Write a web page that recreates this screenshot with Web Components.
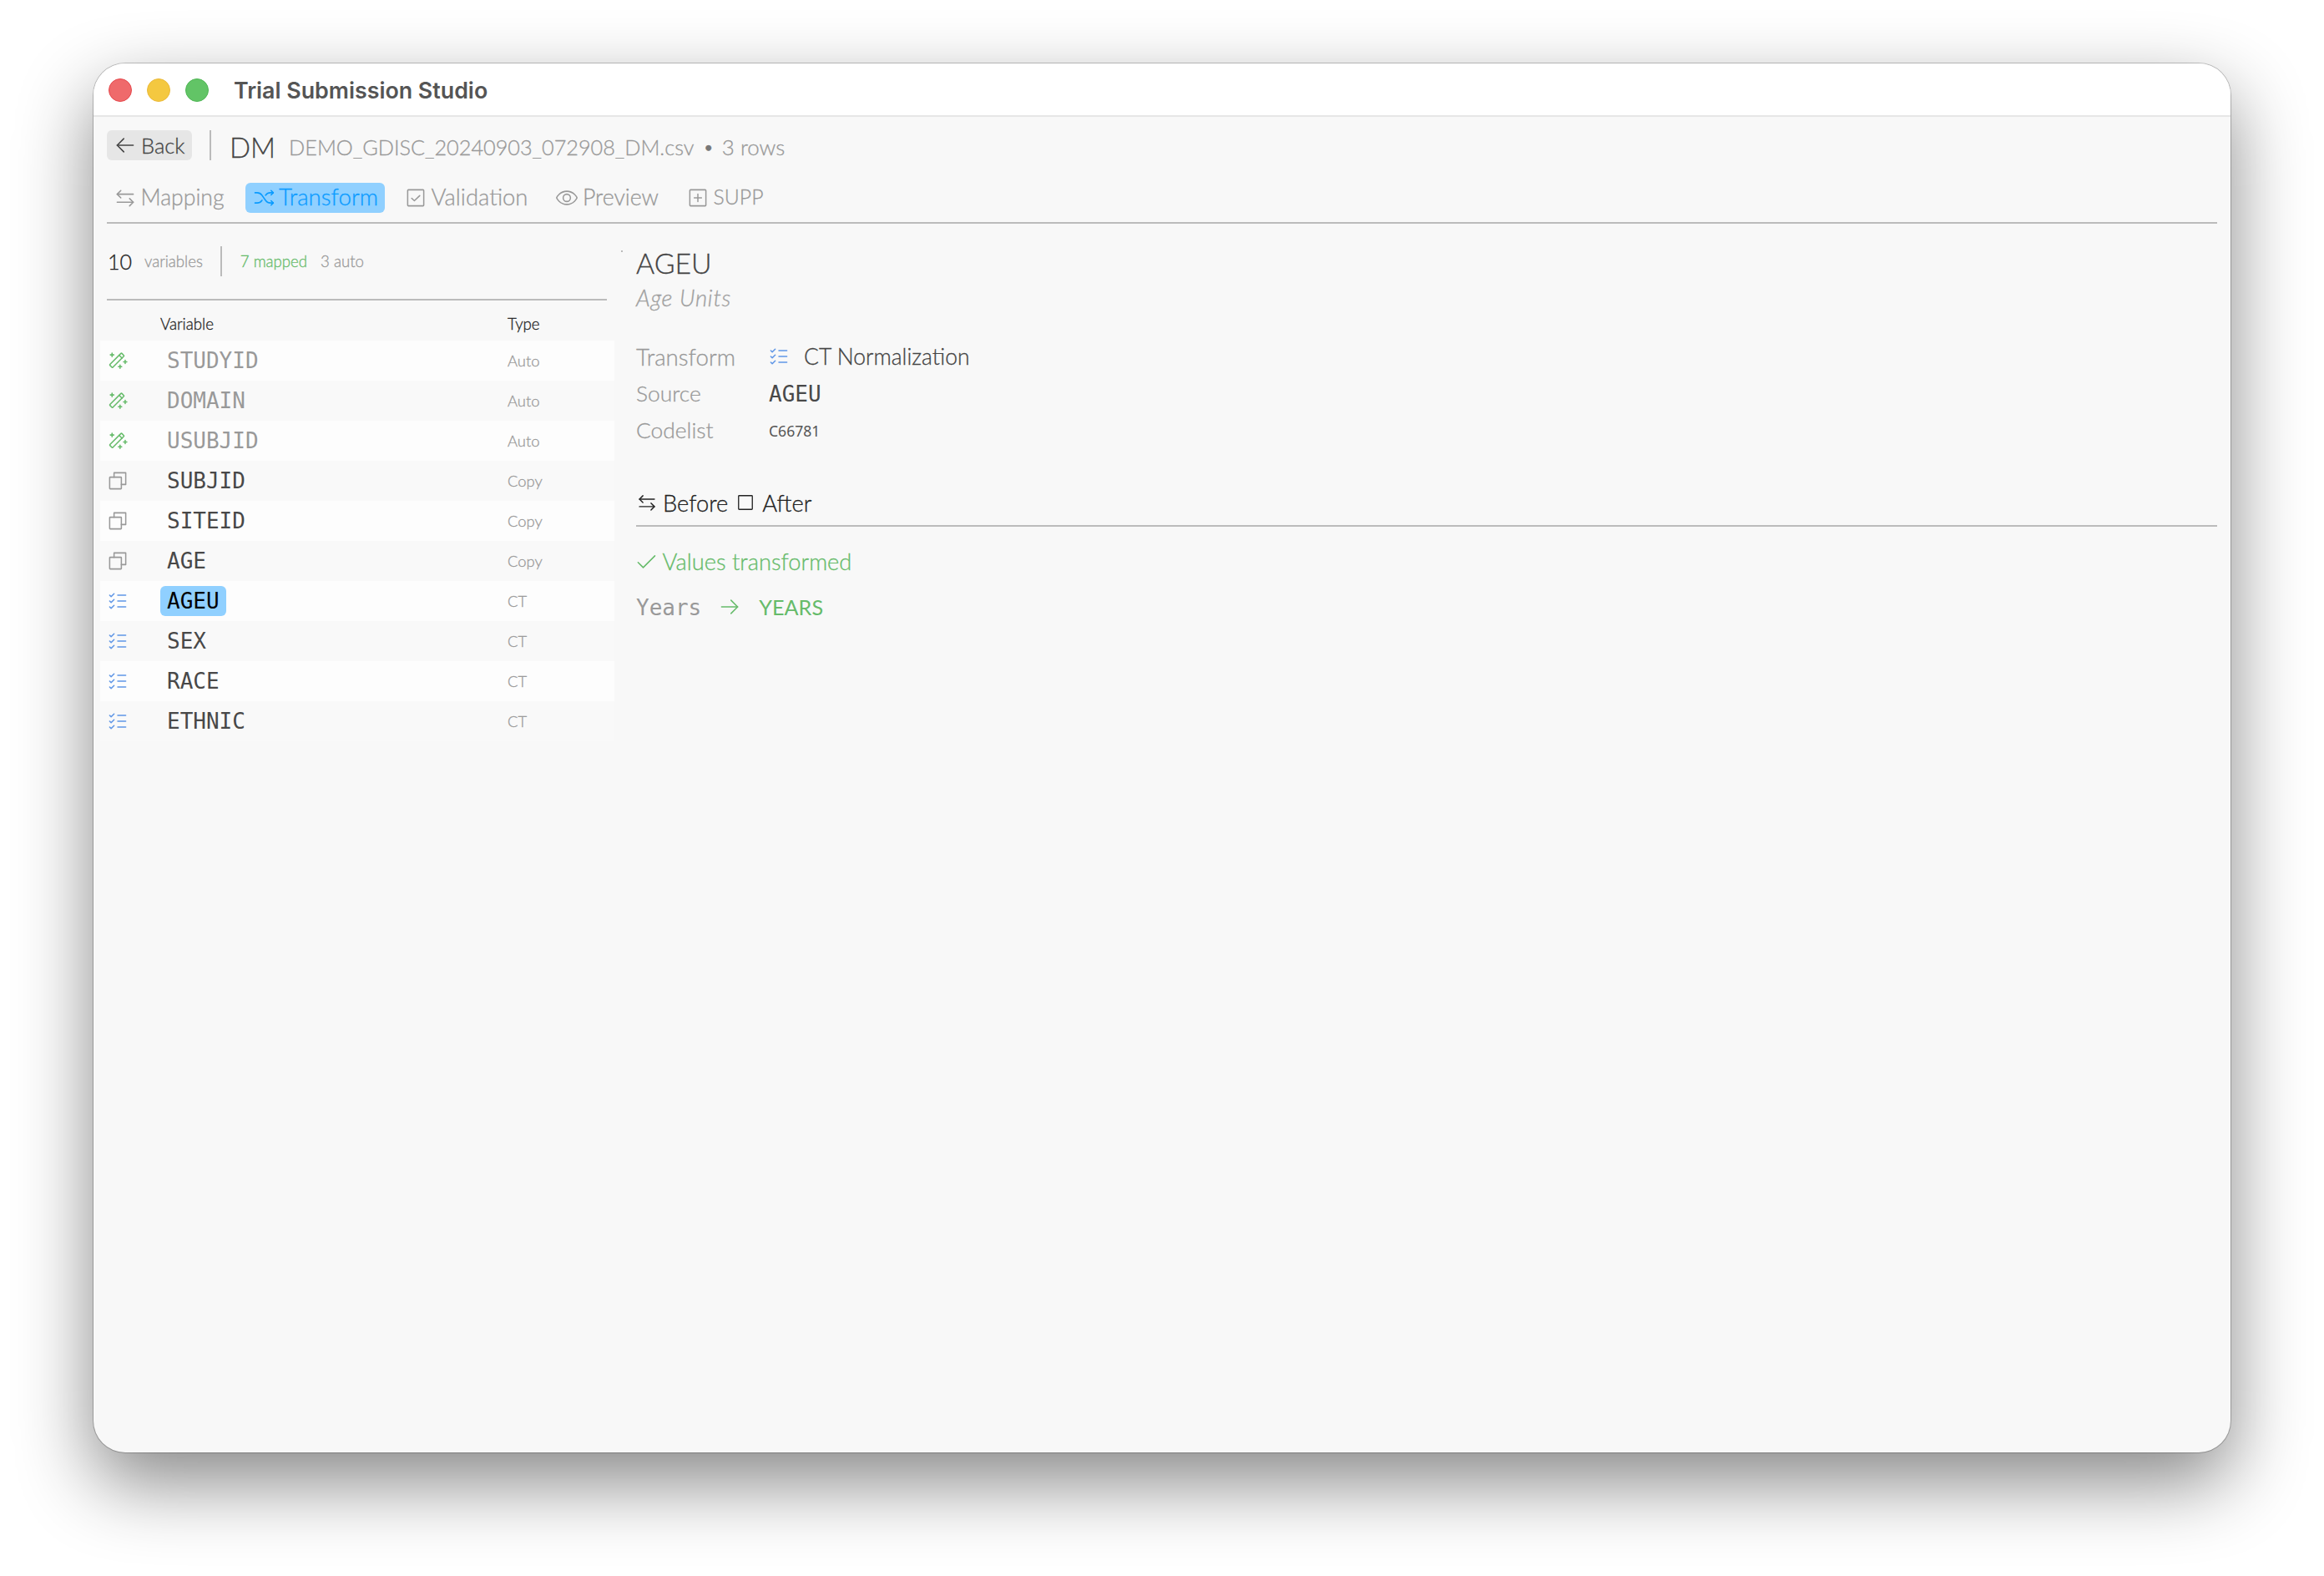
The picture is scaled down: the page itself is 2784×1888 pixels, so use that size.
<!doctype html>
<html><head><meta charset="utf-8"><title>Trial Submission Studio</title>
<style>html,body{margin:0;background:#fff}</style></head>
<body>
<app-window>
  <title-bar slot="title">Trial Submission Studio</title-bar>
  <top-bar></top-bar>
  <tab-bar></tab-bar>
  <div class="x" style="display:grid;grid-template-columns:616px 1fr;column-gap:26px;margin-left:-8px">
    <var-panel></var-panel>
    <detail-panel></detail-panel>
  </div>
</app-window>
<script>
const P={
 back:'<line x1="216" y1="128" x2="40" y2="128"/><polyline points="112,56 40,128 112,200"/>',
 swap:'<line x1="40" y1="88" x2="216" y2="88"/><polyline points="80,48 40,88 80,128"/><line x1="40" y1="176" x2="216" y2="176"/><polyline points="176,136 216,176 176,216"/>',
 shuffle:'<path d="M32,72H55.06a64,64,0,0,1,52.08,26.8l41.72,58.4A64,64,0,0,0,200.94,184H232"/><polyline points="208,48 232,72 208,96"/><polyline points="208,160 232,184 208,208"/><path d="M147,100.18l1.84-2.58A64,64,0,0,1,200.94,72H232"/><path d="M32,184H55.06a64,64,0,0,0,52.08-26.8l1.84-2.58"/>',
 checksq:'<rect x="40" y="40" width="176" height="176" rx="8"/><polyline points="172,104 113.3,160 84,132"/>',
 eye:'<path d="M128,56C48,56,16,128,16,128s32,72,112,72,112-72,112-72S208,56,128,56Z"/><circle cx="128" cy="128" r="40"/>',
 plussq:'<rect x="40" y="40" width="176" height="176" rx="8"/><line x1="88" y1="128" x2="168" y2="128"/><line x1="128" y1="88" x2="128" y2="168"/>',
 wand:'<rect x="27" y="103" width="184" height="44" rx="7" transform="rotate(-45 119 125)"/><line x1="143" y1="69" x2="175" y2="101"/><path d="M66,46V84M47,65H85M154,176V212M136,194H172M210,124V160M192,142H228"/>',
 copy:'<polyline points="168,168 216,168 216,40 88,40 88,88"/><rect x="40" y="88" width="128" height="128" rx="6"/>',
 list:'<line x1="128" y1="128" x2="216" y2="128"/><line x1="128" y1="64" x2="216" y2="64"/><line x1="128" y1="192" x2="216" y2="192"/><polyline points="40,64 56,80 88,48"/><polyline points="40,128 56,144 88,112"/><polyline points="40,192 56,208 88,176"/>',
 check:'<polyline points="40,144 96,200 224,72"/>',
 right:'<line x1="40" y1="128" x2="216" y2="128"/><polyline points="144,56 216,128 144,200"/>',
 square:'<rect x="40" y="40" width="176" height="176" rx="8"/>'
};
function def(name,css,html){
 customElements.define(name,class extends HTMLElement{
  connectedCallback(){
   if(this.shadowRoot)return;
   const r=this.attachShadow({mode:'open'});
   r.innerHTML='<style>'+css+'</style>'+(typeof html==='function'?html(this):html);
  }
 });
}
const UI='Lato,"Liberation Sans",sans-serif', MONO='"DejaVu Sans Mono",monospace';
def('x-icon',':host{display:inline-flex;flex:none;width:var(--s,28px);height:var(--s,28px)}svg{width:100%;height:100%;fill:none;stroke:currentColor;stroke-linecap:round;stroke-linejoin:round}',
 h=>`<svg viewBox="0 0 256 256" stroke-width="${h.getAttribute('w')||14}">${P[h.getAttribute('name')]}</svg>`);
def('app-window',`:host{display:block;width:2560px;height:1664px;margin:76px 112px 148px;box-sizing:border-box;background:#f8f8f8;border-radius:38px;box-shadow:0 0 0 1px rgba(0,0,0,.22),0 36px 90px rgba(0,0,0,.47);overflow:hidden;-webkit-text-stroke:.3px}
 .content{padding:16px 16px 0}`,'<slot name="title"></slot><div class="content"><slot></slot></div>');
def('title-bar',`:host{display:flex;align-items:center;box-sizing:border-box;height:64px;background:#fff;border-bottom:2px solid #e6e6e6;padding:2px 0 0 18px;font:600 26.8px Inter,sans-serif;color:#555;-webkit-text-stroke:0}
 i{width:26px;height:26px;border-radius:50%;margin-right:18px;border:1px solid}
 .r{background:#ef6a6b;border-color:#e5484d}.y{background:#f4c840;border-color:#eab93a}.g{background:#62c466;border-color:#4fb655}
 span{margin-left:12px}`,'<i class="r"></i><i class="y"></i><i class="g"></i><span><slot></slot></span>');
def('top-bar',`:host{display:flex;align-items:center;height:36px;font:300 25.9px ${UI};color:#999}
 .back{display:flex;align-items:center;gap:5px;height:36px;padding:0 8px;background:#e6e6e6;border-radius:6px;color:#444;font-size:25.5px;box-sizing:border-box;width:102px}
 .sep{width:2px;height:36px;background:#bbb;margin:0 22px 0 21px}
 .dm{font-size:33px;color:#444;margin-right:16px;position:relative;top:2px;line-height:36px}
 .f{font-size:25.25px;position:relative;top:2px}
 .dot{margin:0 11px 0 12px;position:relative;top:2px;font-size:18px;font-weight:400;color:#777}.rows{position:relative;top:2px}`,
 `<div class="back"><x-icon name="back"></x-icon><span>Back</span></div><div class="sep"></div><span class="dm">DM</span><span class="f">DEMO_GDISC_20240903_072908_DM.csv</span><span class="dot">•</span><span class="rows">3 rows</span>`);
def('tab-item',`:host{display:flex;align-items:center;gap:4.5px;height:36px;padding:0 8px;border-radius:6px;color:#999;font:300 var(--fs,27px) ${UI}}
 span{position:relative;top:-1.5px}
 :host([active]){background:#90d0ff;color:#0a9bff}`,
 h=>`<x-icon name="${h.getAttribute('icon')}"></x-icon><span><slot></slot></span>`);
def('tab-bar',`:host{display:flex;gap:17px;margin-top:27px;padding-bottom:11px;border-bottom:2px solid #bbb}`,
 `<tab-item icon="swap" style="--fs:26.6px">Mapping</tab-item><tab-item icon="shuffle" active style="--fs:27.7px">Transform</tab-item><tab-item icon="checksq" style="--fs:27.4px;margin-left:-2px">Validation</tab-item><tab-item icon="eye" style="--fs:26.7px">Preview</tab-item><tab-item icon="plussq" style="--fs:24.8px">SUPP</tab-item>`);
def('var-row',`:host{display:grid;grid-template-columns:72px 416px 1fr;align-items:center;height:48px;background:#f9f9f9}
 :host([alt]){background:#fdfdfd}
 x-icon{margin-left:7px;color:var(--ic)}
 .n{justify-self:start;height:36px;padding:0 8px;border-radius:6px;font:26px/36px ${MONO};color:#484848;-webkit-text-stroke:0}
 :host([dim]) .n{color:#999}
 :host([sel]) .n{background:#90d0ff;color:#000}
 .t{font:300 18.4px ${UI};color:#999}`,
 h=>`<x-icon name="${h.getAttribute('icon')}" style="--ic:${h.getAttribute('ic')}"></x-icon><span class="n">${h.getAttribute('n')}</span><span class="t">${h.getAttribute('t')}</span>`);
def('var-panel',`:host{display:block}
 .s{display:flex;align-items:center;height:36px;margin:27px 0 0 8px;font:300 18.6px ${UI};color:#999;width:608px}
 .c{font-size:25px;color:#222;margin:0 16px 0 1px;width:28px}
 .sp{width:2px;height:36px;background:#bbb;margin:0 22px 0 21px}
 .m{color:#66bb6a;margin-right:16px}
 hr{height:2px;border:0;background:#bbb;margin:27px 0 0 8px;width:599px}
 .h{display:grid;grid-template-columns:72px 416px 1fr;align-items:center;box-sizing:border-box;height:48px;padding-top:8px;font:300 18.7px ${UI};color:#222}
 .h span:first-child{grid-column:2}`,
 ()=>{
  const G='#66bb6a',K='#999',B='#5f96e6';
  const rows=[['STUDYID','Auto','wand',G,1],['DOMAIN','Auto','wand',G,1],['USUBJID','Auto','wand',G,1],['SUBJID','Copy','copy',K],['SITEID','Copy','copy',K],['AGE','Copy','copy',K],['AGEU','CT','list',B,0,1],['SEX','CT','list',B],['RACE','CT','list',B],['ETHNIC','CT','list',B]];
  return `<div class="s"><span class="c">10</span><span>variables</span><span class="sp"></span><span class="m">7 mapped</span><span>3 auto</span></div><hr><div class="h"><span>Variable</span><span>Type</span></div>`+
  rows.map((r,i)=>`<var-row n="${r[0]}" t="${r[1]}" icon="${r[2]}" ic="${r[3]}" ${i%2==0?'alt':''} ${r[4]?'dim':''} ${r[5]?'sel':''}></var-row>`).join('');
 });
def('detail-panel',`:host{display:block;position:relative;font:300 26.4px ${UI};color:#999}
 .dot{position:absolute;left:-18px;top:32px;width:2px;height:2px;background:#bbb}
 h1{margin:25px 0 0;font:300 33.8px/44px ${UI};color:#444}
 .sub{margin-top:4px;font:italic 300 27.5px/32px ${UI};color:#a0a0a0;letter-spacing:.75px}
 dl{display:grid;grid-template-columns:159px 1fr;grid-auto-rows:44px;align-items:center;margin:32px 0 0}
 dt,dd{margin:0}
 dd{display:flex;align-items:center;color:#444}
 dd x-icon{color:#5f96e6;margin:0 16px 0 -2px}
 .tr{font-size:27.7px}
 .mono{font:26px ${MONO};color:#484848;-webkit-text-stroke:0;position:relative;top:1px}
 .cl{font:400 17.6px "Noto Sans",sans-serif;color:#555;-webkit-text-stroke:0;position:relative;top:1px}
 .tabs{display:flex;align-items:center;height:36px;margin-top:47px;padding-bottom:9px;border-bottom:2px solid #bbb;color:#222;font-size:27.3px}
 .ok{display:flex;align-items:center;height:36px;margin-top:23px;color:#66bb6a;font-size:27.3px}
 .vals{display:flex;align-items:center;height:36px;margin-top:19px;color:#66bb6a}
 .o{font:26px ${MONO};color:#999;-webkit-text-stroke:0;position:relative;top:1px}
 .nw{font:400 25.2px ${UI};-webkit-text-stroke:0}`,
 `<span class="dot"></span><h1>AGEU</h1><div class="sub">Age Units</div>
 <dl><dt class="tr">Transform</dt><dd><x-icon name="list"></x-icon><span style="font-size:26.5px">CT Normalization</span></dd><dt>Source</dt><dd class="mono">AGEU</dd><dt>Codelist</dt><dd class="cl">C66781</dd></dl>
 <div class="tabs"><x-icon name="swap" style="--s:26px;margin-right:6px"></x-icon><span>Before</span><x-icon name="square" style="--s:24px;margin:0 8px 0 9px"></x-icon><span>After</span></div>
 <div class="ok"><x-icon name="check" style="margin:0 5.5px 0 -2px"></x-icon><span>Values transformed</span></div>
 <div class="vals"><span class="o">Years</span><x-icon name="right" style="margin:0 21px 0 20px"></x-icon><span class="nw">YEARS</span></div>`);
</script>
</body></html>
